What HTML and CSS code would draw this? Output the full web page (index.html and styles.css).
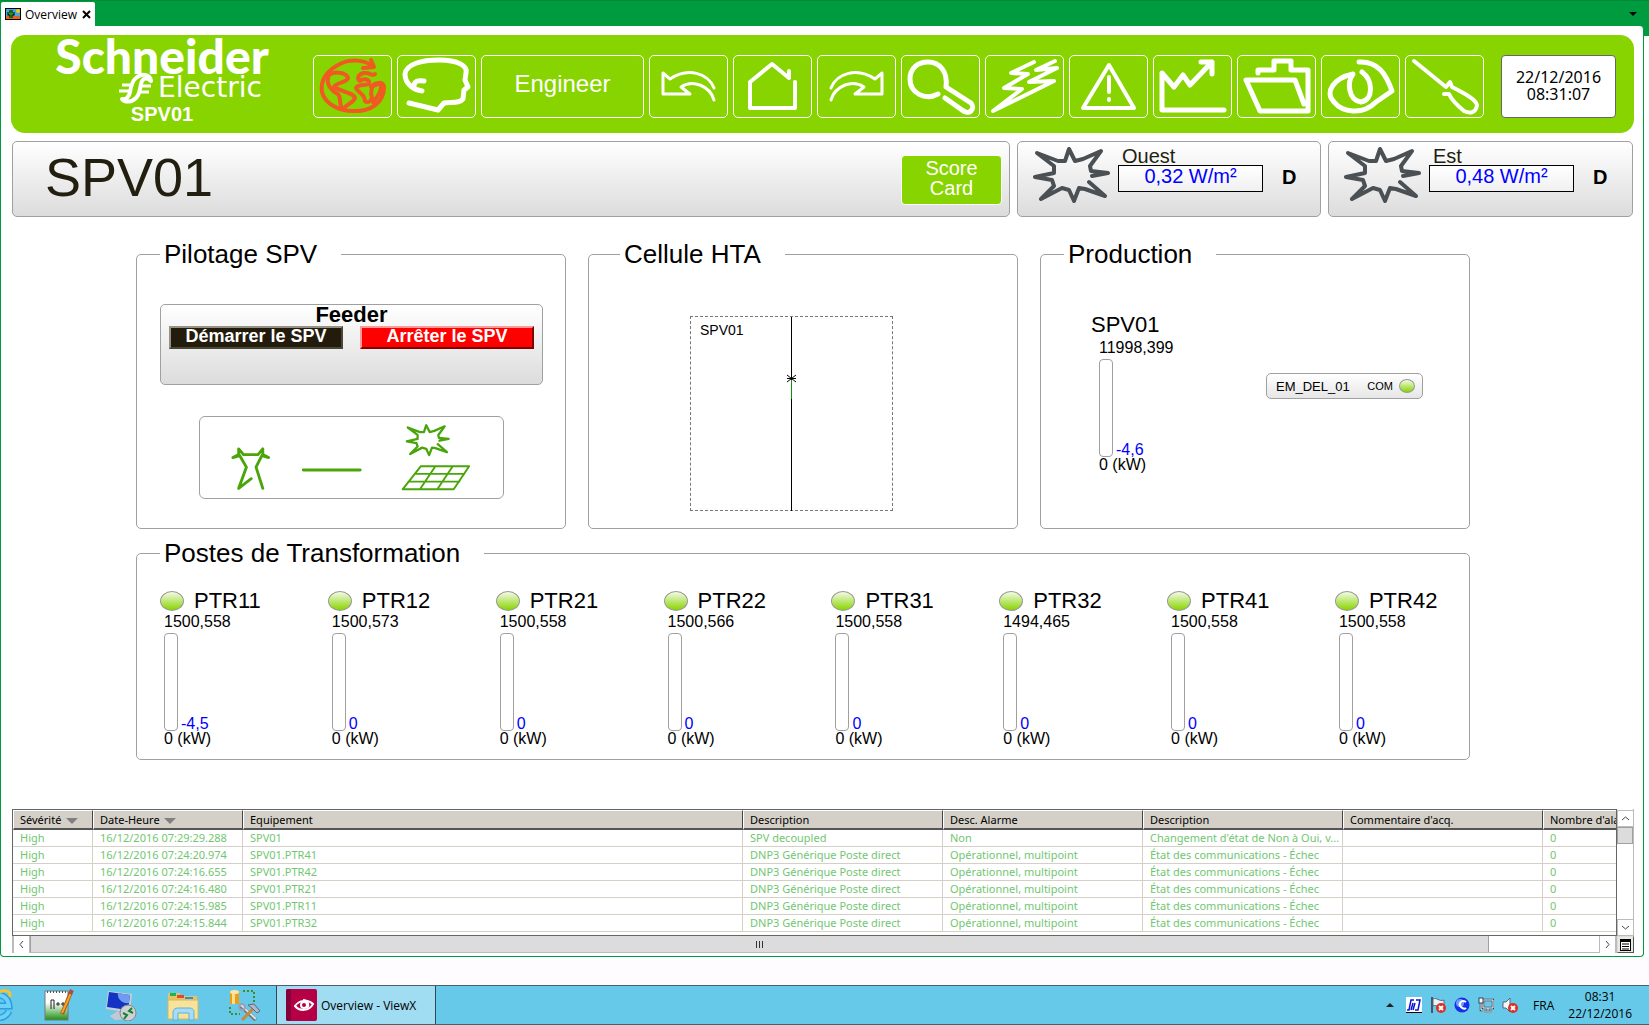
FILE: index.html
```html
<!DOCTYPE html>
<html lang="fr">
<head>
    <meta charset="UTF-8">
    <meta name="viewport" content="width=device-width, initial-scale=1.0">
    <title>Overview - ViewX</title>
    <link rel="stylesheet" href="styles.css">
</head>
<body>
    <svg class="defs" aria-hidden="true">
        <symbol id="sun" viewBox="0 0 77 56">
            <path d="M59 29L75 26L58 24L57 19L68 4L50 12L42 14L36 2L32 14L25 14L4 6L21 19L21 26L2 30L19 33L21 39L8 52L29 41L36 43L41 54L46 41L52 42L72 49L56 35" fill="none" stroke="currentColor" stroke-width="4" stroke-linejoin="round" stroke-linecap="round"/>
        </symbol>
        <symbol id="error" viewBox="0 0 10 10">
            <circle cx="5" cy="5" r="5" fill="#d93025"/>
            <path d="M3 3L7 7M7 3L3 7" stroke="#fff" stroke-width="2"/>
        </symbol>
    </svg>

    <div class="tabs">
        <div class="tab">
            <svg width="16" height="12" viewBox="0 0 16 12">
                <rect width="16" height="12" fill="#000"/>
                <rect x="1" y="1" width="14" height="7" fill="#3fa9e0"/>
                <rect x="1" y="8" width="14" height="3" fill="#e0641c"/>
                <circle cx="13" cy="3" r="2" fill="#ffc400"/>
                <path d="M6 10V2M4 4V6H8V4" stroke="#000" stroke-width="3" fill="none"/>
                <path d="M6 10V2M4 4V6H8V4" stroke="#3cc82a" stroke-width="1" fill="none"/>
            </svg>
            <span>Overview</span>
            <button class="tab-close" aria-label="Fermer">
                <svg width="9" height="9" viewBox="0 0 9 9"><path d="M1 1L8 8M8 1L1 8" stroke="#000" stroke-width="2"/></svg>
            </button>
        </div>
        <button class="tab-menu" aria-label="Onglets"></button>
    </div>

    <div class="window-area">
    <main class="window">
        <header class="banner">
            <div class="brand">
                <div class="brand-name">Schneider</div>
                <div class="brand-sub">
                    <svg width="36" height="32" viewBox="0 0 36 32">
                        <path d="M33 9C32 2 24 1 18 6C14 9 13 14 12 20C11 25 8 28 4 27C7 31 14 30 18 26C22 22 22 16 23 12C24 7 28 4 33 9Z" fill="none" stroke="#fff" stroke-width="4" stroke-linejoin="round"/>
                        <path d="M4 13H14M1 19H13M22 14H33M21 20H31" stroke="#fff" stroke-width="3"/>
                    </svg>
                    <span>Electric</span>
                </div>
                <div class="brand-site">SPV01</div>
            </div>
            <nav class="toolbar">
                <button class="tool globe" aria-label="Monde">
                    <svg viewBox="0 0 77 61"><g stroke-width="4">
                        <path d="M57 9C50 4 36 3 28 7C12 14 6 25 8 36C11 48 25 55 39 55C56 56 70 47 70 31C69 25 61 26 57 31L67 27C68 36 63 42 59 46"/>
                        <path d="M57 4L60 11L49 12"/>
                        <path d="M15 19C20 15 32 16 34 22C33 27 22 26 20 31C26 35 40 37 41 42C40 46 33 48 29 53C24 49 28 43 24 38C17 35 11 27 15 19Z"/>
                        <path d="M61 18C58 21 56 16 50 17C45 18 42 22 46 25C50 22 56 23 55 28C50 30 44 28 42 32C44 37 51 38 51 45C54 48 60 44 57 38L58 31"/>
                    </g></svg>
                </button>
                <button class="tool" aria-label="Utilisateur">
                    <svg viewBox="0 0 77 61"><path stroke-width="5" d="M24 35C17 34 7 29 7 18C8 8 24 4 41 4C60 4 70 10 68 17L67 24L70 31L66 34L65 43C62 47 55 46 46 47L40 54L11 47M26 25C20 24 16 25 16 30"/></svg>
                </button>
                <button class="tool tool-wide">Engineer</button>
                <button class="tool" aria-label="Retour">
                    <svg viewBox="0 0 77 61"><path stroke-width="3" d="M64 44C60 30 43 23 31 31L40 38H13V17L20 23C38 11 58 17 64 32"/></svg>
                </button>
                <button class="tool" aria-label="Accueil">
                    <svg viewBox="0 0 77 61"><path stroke-width="4" d="M61 26V52H16V26L38 8L55 22V15"/></svg>
                </button>
                <button class="tool" aria-label="Avancer">
                    <svg viewBox="0 0 77 61"><path stroke-width="3" d="M13 44C17 30 34 23 46 31L37 38H64V17L57 23C39 11 19 17 13 32"/></svg>
                </button>
                <button class="tool" aria-label="Rechercher">
                    <svg viewBox="0 0 77 61"><path stroke-width="5" d="M36 38C23 45 8 37 8 23C8 12 16 6 26 6C38 6 46 16 44 31L69 47C74 53 67 60 60 54L43 42"/></svg>
                </button>
                <button class="tool" aria-label="Evénements">
                    <svg viewBox="0 0 77 61"><path stroke-width="4" d="M48 6L25 17L42 18L18 32L36 33L7 55L68 25L43 26L71 12L50 14L69 5"/></svg>
                </button>
                <button class="tool" aria-label="Alarmes">
                    <svg viewBox="0 0 77 61"><path stroke-width="4" d="M39 9L64 52H13ZM39 21V36M39 43V44"/></svg>
                </button>
                <button class="tool" aria-label="Tendances">
                    <svg viewBox="0 0 77 61"><path stroke-width="5" d="M70 54H8V17L20 31L29 19L36 29L58 6M47 6H58V18"/></svg>
                </button>
                <button class="tool" aria-label="Dossiers">
                    <svg viewBox="0 0 77 61"><path stroke-width="5" d="M20 17V14H36V5H53V14H70V55H22L8 24H57L66 48"/></svg>
                </button>
                <button class="tool" aria-label="Affichage">
                    <svg viewBox="0 0 77 61"><path stroke-width="5" d="M37 6C56 5 64 18 70 35L54 46C40 60 20 56 12 46C2 36 12 22 31 18C25 26 26 44 39 46C52 44 51 24 40 16"/></svg>
                </button>
                <button class="tool" aria-label="Maintenance">
                    <svg viewBox="0 0 77 61"><path stroke-width="4" d="M8 5L40 31L44 26L46 31C56 36 70 43 71 49C70 57 64 58 58 55C52 50 46 45 43 38H38"/></svg>
                </button>
            </nav>
            <div class="datetime">22/12/2016<br>08:31:07</div>
        </header>

        <section class="summary">
            <div class="card title-card">
                <h1>SPV01</h1>
                <button class="score">Score<br>Card</button>
            </div>
            <div class="card sensor">
                <svg class="sun-icon"><use href="#sun"/></svg>
                <div class="sensor-body">
                    <label for="ouest">Ouest</label>
                    <input id="ouest" type="text" value="0,32 W/m²" readonly>
                </div>
                <b>D</b>
            </div>
            <div class="card sensor">
                <svg class="sun-icon"><use href="#sun"/></svg>
                <div class="sensor-body">
                    <label for="est">Est</label>
                    <input id="est" type="text" value="0,48 W/m²" readonly>
                </div>
                <b>D</b>
            </div>
        </section>

        <section class="groups">
            <fieldset>
                <legend>Pilotage SPV</legend>
                <div class="card feeder">
                    <h2>Feeder</h2>
                    <div class="feeder-buttons">
                        <button class="start">Démarrer le SPV</button>
                        <button class="stop">Arrêter le SPV</button>
                    </div>
                </div>
                <div class="flow">
                    <svg viewBox="0 0 306 84">
                        <g fill="none" stroke="#4aa50a" stroke-width="3" stroke-linejoin="round" stroke-linecap="round">
                            <path d="M49 64L36 74L44 52L37 40L30 42L36 39L36 33L41 39H56L61 33L61 39L67 42L60 40L54 52L61 74"/>
                            <path d="M103 55H162"/>
                            <path stroke-width="2" d="M225 51H275L259 75H206ZM219 59H270M212 67H265M240 51L224 75M258 51L242 75"/>
                        </g>
                        <use href="#sun" x="209" y="5" width="46" height="38" color="#4aa50a"/>
                    </svg>
                </div>
            </fieldset>

            <fieldset class="hta">
                <legend>Cellule HTA</legend>
                <div class="cell">
                    <span>SPV01</span>
                    <svg viewBox="0 0 202 194">
                        <path d="M100.500 0V194" stroke="#000"/>
                        <path d="M100.500 63V82" stroke="#009a00"/>
                        <path d="M96 58L105 65M105 58L96 65M96 61.500H105" stroke="#000"/>
                    </svg>
                </div>
            </fieldset>

            <fieldset>
                <legend>Production</legend>
                <div class="production">
                    <div class="prod-meter">
                        <h3>SPV01</h3>
                        <div class="meter">
                            <div class="max">11998,399</div>
                            <div class="level"><div class="bar"></div><span>-4,6</span></div>
                            <div class="min">0 (kW)</div>
                        </div>
                    </div>
                    <div class="card device">
                        <span>EM_DEL_01</span>
                        <small>COM</small>
                        <i class="led led-small"></i>
                    </div>
                </div>
            </fieldset>

            <fieldset class="wide">
                <legend>Postes de Transformation</legend>
                <div class="stations" id="stations"></div>
            </fieldset>
        </section>

        <section class="alarms">
            <div class="grid">
                <table>
                    <colgroup>
                        <col class="c-sev"><col class="c-date"><col class="c-equip"><col class="c-text"><col class="c-text"><col class="c-text"><col class="c-text"><col class="c-text">
                    </colgroup>
                    <thead>
                        <tr>
                            <th>Sévérité <i class="sort"></i></th>
                            <th>Date-Heure <i class="sort"></i></th>
                            <th>Equipement</th>
                            <th>Description</th>
                            <th>Desc. Alarme</th>
                            <th>Description</th>
                            <th>Commentaire d'acq.</th>
                            <th>Nombre d'alarmes</th>
                        </tr>
                    </thead>
                    <tbody>
                        <tr><td>High</td><td>16/12/2016 07:29:29.288</td><td>SPV01</td><td>SPV decoupled</td><td>Non</td><td>Changement d'état de Non à Oui, v...</td><td></td><td>0</td></tr>
                        <tr><td>High</td><td>16/12/2016 07:24:20.974</td><td>SPV01.PTR41</td><td>DNP3 Générique Poste direct</td><td>Opérationnel, multipoint</td><td>État des communications - Échec</td><td></td><td>0</td></tr>
                        <tr><td>High</td><td>16/12/2016 07:24:16.655</td><td>SPV01.PTR42</td><td>DNP3 Générique Poste direct</td><td>Opérationnel, multipoint</td><td>État des communications - Échec</td><td></td><td>0</td></tr>
                        <tr><td>High</td><td>16/12/2016 07:24:16.480</td><td>SPV01.PTR21</td><td>DNP3 Générique Poste direct</td><td>Opérationnel, multipoint</td><td>État des communications - Échec</td><td></td><td>0</td></tr>
                        <tr><td>High</td><td>16/12/2016 07:24:15.985</td><td>SPV01.PTR11</td><td>DNP3 Générique Poste direct</td><td>Opérationnel, multipoint</td><td>État des communications - Échec</td><td></td><td>0</td></tr>
                        <tr><td>High</td><td>16/12/2016 07:24:15.844</td><td>SPV01.PTR32</td><td>DNP3 Générique Poste direct</td><td>Opérationnel, multipoint</td><td>État des communications - Échec</td><td></td><td>0</td></tr>
                    </tbody>
                </table>
            </div>
            <div class="vscroll">
                <button aria-label="Haut"><svg width="9" height="7" viewBox="0 0 9 7"><path d="M1 5L4.500 2L8 5"/></svg></button>
                <div class="vthumb"></div>
                <button aria-label="Bas"><svg width="9" height="7" viewBox="0 0 9 7"><path d="M1 2L4.500 5L8 2"/></svg></button>
            </div>
            <div class="hscroll">
                <button aria-label="Gauche"><svg width="7" height="9" viewBox="0 0 7 9"><path d="M5 1L2 4.500L5 8"/></svg></button>
                <div class="htrack"><div class="hthumb"><i></i><i></i><i></i></div></div>
                <button aria-label="Droite"><svg width="7" height="9" viewBox="0 0 7 9"><path d="M2 1L5 4.500L2 8"/></svg></button>
            </div>
            <button class="list-menu" aria-label="Options">
                <svg width="11" height="12" viewBox="0 0 11 12"><rect width="11" height="12" fill="#000"/><path d="M1 3H10V11H1Z" fill="#fff"/><path d="M2 5H9M2 7.500H9M2 10H9" stroke="#000"/></svg>
            </button>
        </section>
    </main>
    </div>

    <footer class="taskbar">
        <button class="task task-first" aria-label="Internet Explorer">
            <svg width="32" height="32" viewBox="0 0 32 32"><path d="M28 22C24 32 6 32 5 17C6 3 27 2 28 17H10" fill="none" stroke="#2a9fe0" stroke-width="7"/><path d="M28 22C24 32 6 32 5 17C6 3 27 2 28 17H10" fill="none" stroke="#6cd0fa" stroke-width="4"/><path d="M12 6C22 0 30 0 29 8" fill="none" stroke="#f5c32c" stroke-width="3"/></svg>
        </button>
        <button class="task" aria-label="Notepad++">
            <svg width="32" height="32" viewBox="0 0 32 32">
                <defs><linearGradient id="npp" x2="0" y2="1"><stop offset=".4" stop-color="#fff"/><stop offset="1" stop-color="#1f8f14"/></linearGradient></defs>
                <rect x="2" y="2" width="23" height="29" fill="url(#npp)" stroke="#777"/>
                <path d="M4 3H24" stroke="#555" stroke-width="2" stroke-dasharray="1 2"/>
                <path d="M8 20V11H11V20M13 15H17M15 13V17M18 15H22M20 13V17" fill="none" stroke="#222"/>
                <path d="M28 3L19 25" stroke="#a85a10" stroke-width="4"/><path d="M28 4L19 24" stroke="#f5a32a" stroke-width="2"/><path d="M29 1L27 5" stroke="#b04a4a" stroke-width="4"/>
            </svg>
        </button>
        <button class="task" aria-label="Bureau à distance">
            <svg width="32" height="32" viewBox="0 0 32 32">
                <path d="M5 27L13 22L22 30L10 31Z" fill="#c5c9cf"/>
                <path d="M3 2L27 5L25 24L1 20Z" fill="#c8ccd6"/><path d="M4 3L25 6L23 21L2 18Z" fill="#1233c4"/><path d="M13 4L25 6L24 14C17 15 12 10 13 4Z" fill="#6f9bf0"/>
                <circle cx="23" cy="24" r="8" fill="#ccd2cf" stroke="#888"/><path d="M18 24L22 26L19 30M27 19L24 22L28 24" fill="none" stroke="#14803a" stroke-width="2"/>
            </svg>
        </button>
        <button class="task" aria-label="Explorateur">
            <svg width="32" height="32" viewBox="0 0 32 32">
                <path d="M1 9V4H12L14 7H30V30H1Z" fill="#e6c367"/><path d="M3 4H9V7H3Z" fill="#22b14c"/><path d="M10 6H17V9H10Z" fill="#e04a2a"/><path d="M18 8H26V10H18Z" fill="#2a8fe0"/>
                <path d="M1 11H31V30H1Z" fill="#f8e39b" stroke="#d9b65a"/>
                <path d="M6 31V23C6 20 9 19 11 19H22C26 19 27 21 27 23V31H22V24H11V31Z" fill="#a8dcf5" stroke="#5fb2da"/>
            </svg>
        </button>
        <button class="task" aria-label="Outils base de données">
            <svg width="32" height="32" viewBox="0 0 32 32">
                <rect x="1" y="3" width="9" height="12" fill="#e8a01c"/><rect x="3" y="3" width="3" height="12" fill="#fbe08a"/><ellipse cx="5.500" cy="3" rx="4.500" ry="2" fill="#fbe6a8"/>
                <path d="M14 2H25V13M1 18V25H11" fill="none" stroke="#3d8f22" stroke-width="2" stroke-dasharray="2 2"/>
                <path d="M12 17L27 31" stroke="#777" stroke-width="4"/><path d="M12 16L27 30" stroke="#dde2ea" stroke-width="2"/><circle cx="13" cy="18" r="3" fill="none" stroke="#99a3b3" stroke-width="2"/>
                <path d="M24 20L13 31" stroke="#c88a3a" stroke-width="3"/><path d="M19 16L25 15L31 22L28 24L24 20Z" fill="#aeb8c8" stroke="#667"/>
            </svg>
        </button>
        <button class="task-active">
            <svg width="31" height="32" viewBox="0 0 31 32">
                <rect width="31" height="32" rx="2" fill="#b50045"/><rect width="5" height="32" rx="2" fill="#85003a"/>
                <path d="M9 17C13 11 22 10 27 15C23 22 14 23 9 17Z" fill="none" stroke="#fff" stroke-width="2"/><circle cx="18" cy="16" r="3" fill="none" stroke="#fff" stroke-width="2"/><path d="M17 11C21 11 24 15 21 19" fill="none" stroke="#fff" stroke-width="2"/>
            </svg>
            <span>Overview - ViewX</span>
        </button>
        <div class="tray">
            <i class="up"></i>
            <svg width="16" height="16" viewBox="0 0 16 16"><rect width="16" height="16" fill="#fff"/><path d="M0 15.500H16" stroke="#000"/><path d="M1 13H3L5 3H8M7 6L5 13M7 13L9 6M10 3H14L12 13H9" fill="none" stroke="#0a14d8" stroke-width="1.500"/></svg>
            <svg width="16" height="16" viewBox="0 0 16 16"><path d="M2 0V16" stroke="#456" stroke-width="2"/><path d="M3 2C7 0 9 5 14 3V10C9 12 7 7 3 9Z" fill="#e8f4fa" stroke="#567"/><use href="#error" x="6" y="6" width="10" height="10"/></svg>
            <svg width="16" height="16" viewBox="0 0 16 16"><circle cx="8" cy="8" r="7.500" fill="#1430e8"/><circle cx="6" cy="6" r="4" fill="#6f9bff"/><path d="M12 5C7 2 4 7 7 10C9 12 11 12 12 11" fill="none" stroke="#fff" stroke-width="2"/></svg>
            <svg width="16" height="16" viewBox="0 0 16 16"><path d="M5 3H15V11H5ZM10 11V14M6 15H14M3 6V13H5" fill="none" stroke="#345" stroke-width="2.500"/><path d="M5 3H15V11H5ZM10 11V14M6 15H14M3 6V13H5" fill="none" stroke="#fff"/><rect x="1" y="1" width="4" height="5" fill="#fff" stroke="#345"/></svg>
            <svg width="16" height="16" viewBox="0 0 16 16"><path d="M1 5H4L8 1V15L4 11H1Z" fill="#f4f8fa" stroke="#567"/><use href="#error" x="6" y="6" width="10" height="10"/></svg>
            <span class="lang">FRA</span>
            <div class="clock">08:31<br>22/12/2016</div>
        </div>
    </footer>

    <script src="script.js"></script>
</body>
</html>
```

FILE: styles.css
```css
* {
    box-sizing: border-box;
}
body {
    margin: 0;
    min-height: 100vh;
    display: flex;
    flex-direction: column;
    background: #fffcff;
    font-family: "Liberation Sans", Arial, sans-serif;
    color: #000;
}
button {
    font-family: inherit;
    padding: 0;
    margin: 0;
    cursor: pointer;
}
h1, h2, h3 {
    margin: 0;
    font-weight: normal;
}
.defs {
    display: none;
}

/* Tabs */
.tabs {
    display: flex;
    justify-content: space-between;
    height: 26px;
    padding-left: 1px;
    background: #009b3e;
    border-top: 1px solid #008a38;
}
.tab {
    display: flex;
    align-items: center;
    gap: 4px;
    width: 94px;
    margin-top: 1px;
    padding-left: 4px;
    background: #fff;
    border-radius: 2px 2px 0 0;
    font: 12px "Open Sans", sans-serif;
}
.tab-close {
    display: flex;
    margin-left: auto;
    margin-right: 4px;
    border: none;
    background: none;
}
.tab-menu {
    align-self: center;
    width: 0;
    height: 0;
    margin-right: 12px;
    border: 4px solid transparent;
    border-top-color: #000;
    border-bottom: 0;
    background: none;
}

/* Window */
.window-area {
    padding-right: 5px;
    background: linear-gradient(#009b3e 10px, #fff 10px);
}
.window {
    padding: 9px 9px 3px 10px;
    background: #fff;
    border: 1px solid #009b3e;
    border-top: none;
    border-radius: 0 4px 4px 4px;
}
.banner {
    display: flex;
    align-items: flex-end;
    height: 98px;
    padding: 0 18px 15px 0;
    background: #88d400;
    border-radius: 14px;
    color: #fff;
}
.brand {
    flex: 1;
    align-self: flex-start;
    display: flex;
    flex-direction: column;
    align-items: center;
    padding-top: 3px;
}
.brand-name {
    font: 900 48px/36px Lato, sans-serif;
}
.brand-sub {
    display: flex;
    align-items: center;
    gap: 4px;
    height: 28px;
    padding-left: 56px;
    font: 28px/28px "DejaVu Sans", sans-serif;
}
.brand-site {
    font-size: 20px;
    line-height: 24px;
    font-weight: bold;
}
.toolbar {
    display: flex;
    gap: 5px;
}
.tool {
    width: 79px;
    height: 63px;
    border: 1px solid #fff;
    border-radius: 5px;
    background: none;
    color: #fff;
    font-size: 24px;
}
.tool-wide {
    width: 163px;
    padding-bottom: 6px;
}
.tool svg {
    display: block;
    width: 77px;
    height: 61px;
    fill: none;
    stroke: #fff;
    stroke-linecap: round;
    stroke-linejoin: round;
}
.globe svg {
    stroke: #f05a22;
}
.datetime {
    width: 115px;
    height: 63px;
    margin-left: 17px;
    padding-top: 13px;
    border: 1px solid #666;
    border-radius: 4px;
    background: #fff;
    color: #000;
    text-align: center;
    font: 16px/17px "Noto Sans", sans-serif;
}

/* Summary row */
.summary {
    display: grid;
    grid-template-columns: 1fr 304px 305px;
    gap: 7px;
    margin: 8px 1px 0;
}
.card {
    border: 1px solid #a0a0a0;
    border-radius: 5px;
    background: linear-gradient(#fff, #dcdcdc);
}
.title-card {
    display: flex;
    justify-content: space-between;
    height: 76px;
    padding: 13px 7px 0 32px;
}
.title-card h1 {
    font-size: 54px;
    line-height: 44px;
    color: #231f10;
}
.score {
    width: 101px;
    height: 50px;
    padding-bottom: 4px;
    border: 1px solid #fff;
    border-radius: 4px;
    background: #88d400;
    color: #fff;
    font-size: 20px;
    line-height: 20px;
}
.sensor {
    display: flex;
    align-items: flex-start;
    padding: 5px 0 0 15px;
}
.sun-icon {
    width: 77px;
    height: 56px;
    color: #4a5054;
}
.sensor-body {
    width: 145px;
    margin-left: 8px;
}
.sensor label {
    display: block;
    padding-left: 4px;
    font-size: 20px;
    line-height: 18px;
    color: #231f10;
}
.sensor input {
    display: block;
    width: 100%;
    height: 27px;
    padding: 0 0 4px;
    border: 1px solid #000;
    background: linear-gradient(#fff, #f0f0f0);
    text-align: center;
    font: 20px "Liberation Sans", Arial, sans-serif;
    color: #00f;
}
.sensor b {
    margin: 20px 0 0 19px;
    font-size: 20px;
    line-height: 20px;
}

/* Groups */
.groups {
    display: grid;
    grid-template-columns: repeat(3, 1fr);
    gap: 10px 22px;
    padding: 23px 164px 0 125px;
}
fieldset {
    min-width: 0;
    margin: 0;
    padding: 0 22px 17px 23px;
    border: 1px solid #a0a0a0;
    border-radius: 5px;
}
.hta {
    padding-left: 31px;
}
.wide {
    grid-column: 1 / -1;
    padding-bottom: 12px;
}
legend {
    padding: 0 24px 0 4px;
    font-size: 26px;
    line-height: 28px;
}
.feeder {
    height: 81px;
    margin-top: 36px;
    padding: 0 8px;
}
.feeder h2 {
    text-align: center;
    font-size: 22px;
    line-height: 20px;
    font-weight: bold;
}
.feeder-buttons {
    display: flex;
    justify-content: space-between;
    gap: 17px;
    margin-top: 1px;
}
.feeder-buttons button {
    flex: 1;
    height: 23px;
    padding-bottom: 3px;
    color: #fff;
    font-size: 18px;
    line-height: 16px;
    font-weight: bold;
    white-space: nowrap;
}
.start {
    border: 2px solid #969284;
    border-right-color: #4a4636;
    border-bottom-color: #4a4636;
    background: #231c0c;
}
.stop {
    border: 2px solid #ff9a9a;
    border-right-color: #800000;
    border-bottom-color: #800000;
    background: #f00;
}
.flow {
    margin: 31px 39px 0;
    border: 1px solid #a0a0a0;
    border-radius: 6px;
}
.flow svg {
    display: block;
    width: 100%;
    height: 81px;
}
.cell {
    display: grid;
    width: 203px;
    height: 195px;
    margin-top: 48px;
    margin-left: 70px;
    border: 1px dashed #777;
}
.cell span, .cell svg {
    grid-area: 1 / 1;
}
.cell span {
    padding: 5px 9px;
    font-size: 14px;
    line-height: 16px;
}
.cell svg {
    width: 202px;
    height: 194px;
}
.production {
    display: flex;
    align-items: flex-start;
    justify-content: space-between;
    padding: 45px 24px 0 27px;
}
.prod-meter h3 {
    font-size: 22px;
    line-height: 24px;
}
.prod-meter .meter {
    padding-left: 8px;
}
.device {
    display: flex;
    align-items: center;
    width: 157px;
    height: 26px;
    margin-top: 60px;
    padding: 0 7px 0 9px;
    background: linear-gradient(#fff, #e6e6e6);
    font-size: 13px;
}
.device small {
    margin-left: auto;
    margin-right: 6px;
    font-size: 11px;
}
.led {
    width: 24px;
    height: 20px;
    border: 1px solid #999;
    border-radius: 50%;
    background: linear-gradient(#f4fbe6, #88d400);
}
.led-small {
    width: 16px;
    height: 14px;
}
.stations {
    display: grid;
    grid-template-columns: repeat(8, 112px);
    justify-content: space-between;
    padding-top: 24px;
}
.station-head {
    display: flex;
    align-items: center;
    gap: 10px;
    height: 20px;
    font-size: 22px;
    line-height: 20px;
}
.station .meter {
    padding-left: 4px;
}
.meter {
    font-size: 16px;
}
.max {
    line-height: 22px;
}
.level {
    display: flex;
    align-items: flex-end;
    gap: 3px;
    line-height: 14px;
    color: #00f;
}
.bar {
    width: 14px;
    height: 98px;
    border: 1px solid #a0a0a0;
    border-radius: 4px;
    background: #fff;
}
.min {
    line-height: 16px;
}

/* Alarm list */
.alarms {
    display: grid;
    grid-template-columns: 1fr 17px;
    grid-template-rows: 127px 17px;
    margin: 49px 0 0 1px;
    font: 11px "Noto Sans", sans-serif;
}
.grid {
    min-width: 0;
    overflow: hidden;
    border: 1px solid #666;
}
table {
    width: 1730px;
    table-layout: fixed;
    border-collapse: separate;
    border-spacing: 0;
}
.c-sev {
    width: 80px;
}
.c-date {
    width: 150px;
}
.c-equip {
    width: 500px;
}
.c-text {
    width: 200px;
}
th {
    height: 20px;
    padding: 0 0 0 6px;
    border: 1px solid #fff;
    border-right: 1px solid #444;
    border-bottom: 2px solid #555;
    background: #d4d0c8;
    text-align: left;
    font-weight: normal;
    line-height: 16px;
    white-space: nowrap;
}
td {
    height: 17px;
    padding: 0 0 0 7px;
    border-right: 1px solid #d4d0c8;
    border-bottom: 1px solid #d4d0c8;
    line-height: 16px;
    white-space: nowrap;
    color: #72c672;
}
.sort {
    display: inline-block;
    margin-left: 2px;
    border: 6px solid transparent;
    border-top-color: #808080;
    border-bottom: 0;
}
.alarms button {
    display: flex;
    align-items: center;
    justify-content: center;
    width: 17px;
    height: 17px;
    border: 1px solid #bbb;
    background: #fff;
}
.vscroll button svg, .hscroll button svg {
    fill: none;
    stroke: #444;
    stroke-width: 1;
}
.vscroll {
    display: flex;
    flex-direction: column;
    padding-top: 1px;
    border-right: 1px solid #bbb;
}
.vscroll button:last-child {
    margin-top: auto;
}
.vthumb {
    height: 17px;
    border: 1px solid #a0a0a0;
    background: #dcdcdc;
}
.hscroll {
    display: flex;
    border: 1px solid #bbb;
    border-top: none;
}
.hscroll button {
    border-width: 0 1px;
}
.htrack {
    flex: 1;
}
.hthumb {
    display: flex;
    align-items: center;
    justify-content: center;
    gap: 2px;
    width: 93%;
    height: 16px;
    border-right: 1px solid #a0a0a0;
    border-left: 1px solid #a0a0a0;
    background: #dcdcdc;
}
.hthumb i {
    width: 1px;
    height: 7px;
    background: #333;
}
.alarms .list-menu {
    border: 1px solid #ddd;
    border-right-color: #555;
    border-bottom-color: #555;
    background: #ece9e2;
}

/* Taskbar */
.taskbar {
    display: flex;
    height: 40px;
    margin-top: auto;
    border-top: 1px solid #4c5e68;
    border-bottom: 1px solid #4c5e68;
    background: #66c9ea;
    font: 12px "Open Sans", sans-serif;
    overflow: hidden;
}
.task {
    flex: none;
    display: flex;
    align-items: center;
    justify-content: center;
    width: 62px;
    border: none;
    background: none;
}
.task-first {
    margin-left: -34px;
}
.task-active {
    display: flex;
    align-items: center;
    gap: 4px;
    width: 160px;
    padding-left: 9px;
    border: 1px solid #2c4a58;
    border-width: 0 1px;
    background: #a0dcf2;
    font: 12px "Open Sans", sans-serif;
}
.tray {
    display: flex;
    align-items: center;
    gap: 8px;
    margin-left: auto;
    padding-right: 17px;
}
.up {
    margin-right: 4px;
    border: 4px solid transparent;
    border-top: 0;
    border-bottom-color: #222;
}
.lang {
    margin-left: 7px;
}
.clock {
    margin-left: 6px;
    text-align: center;
    line-height: 17px;
}
```

FILE: script.js
```js
const stations = [
    { name: "PTR11", max: "1500,558", value: "-4,5" },
    { name: "PTR12", max: "1500,573", value: "0" },
    { name: "PTR21", max: "1500,558", value: "0" },
    { name: "PTR22", max: "1500,566", value: "0" },
    { name: "PTR31", max: "1500,558", value: "0" },
    { name: "PTR32", max: "1494,465", value: "0" },
    { name: "PTR41", max: "1500,558", value: "0" },
    { name: "PTR42", max: "1500,558", value: "0" }
];

document.getElementById("stations").innerHTML = stations.map(s => `
    <div class="station">
        <div class="station-head"><i class="led"></i>${s.name}</div>
        <div class="meter">
            <div class="max">${s.max}</div>
            <div class="level"><div class="bar"></div><span>${s.value}</span></div>
            <div class="min">0 (kW)</div>
        </div>
    </div>`).join("");
```
